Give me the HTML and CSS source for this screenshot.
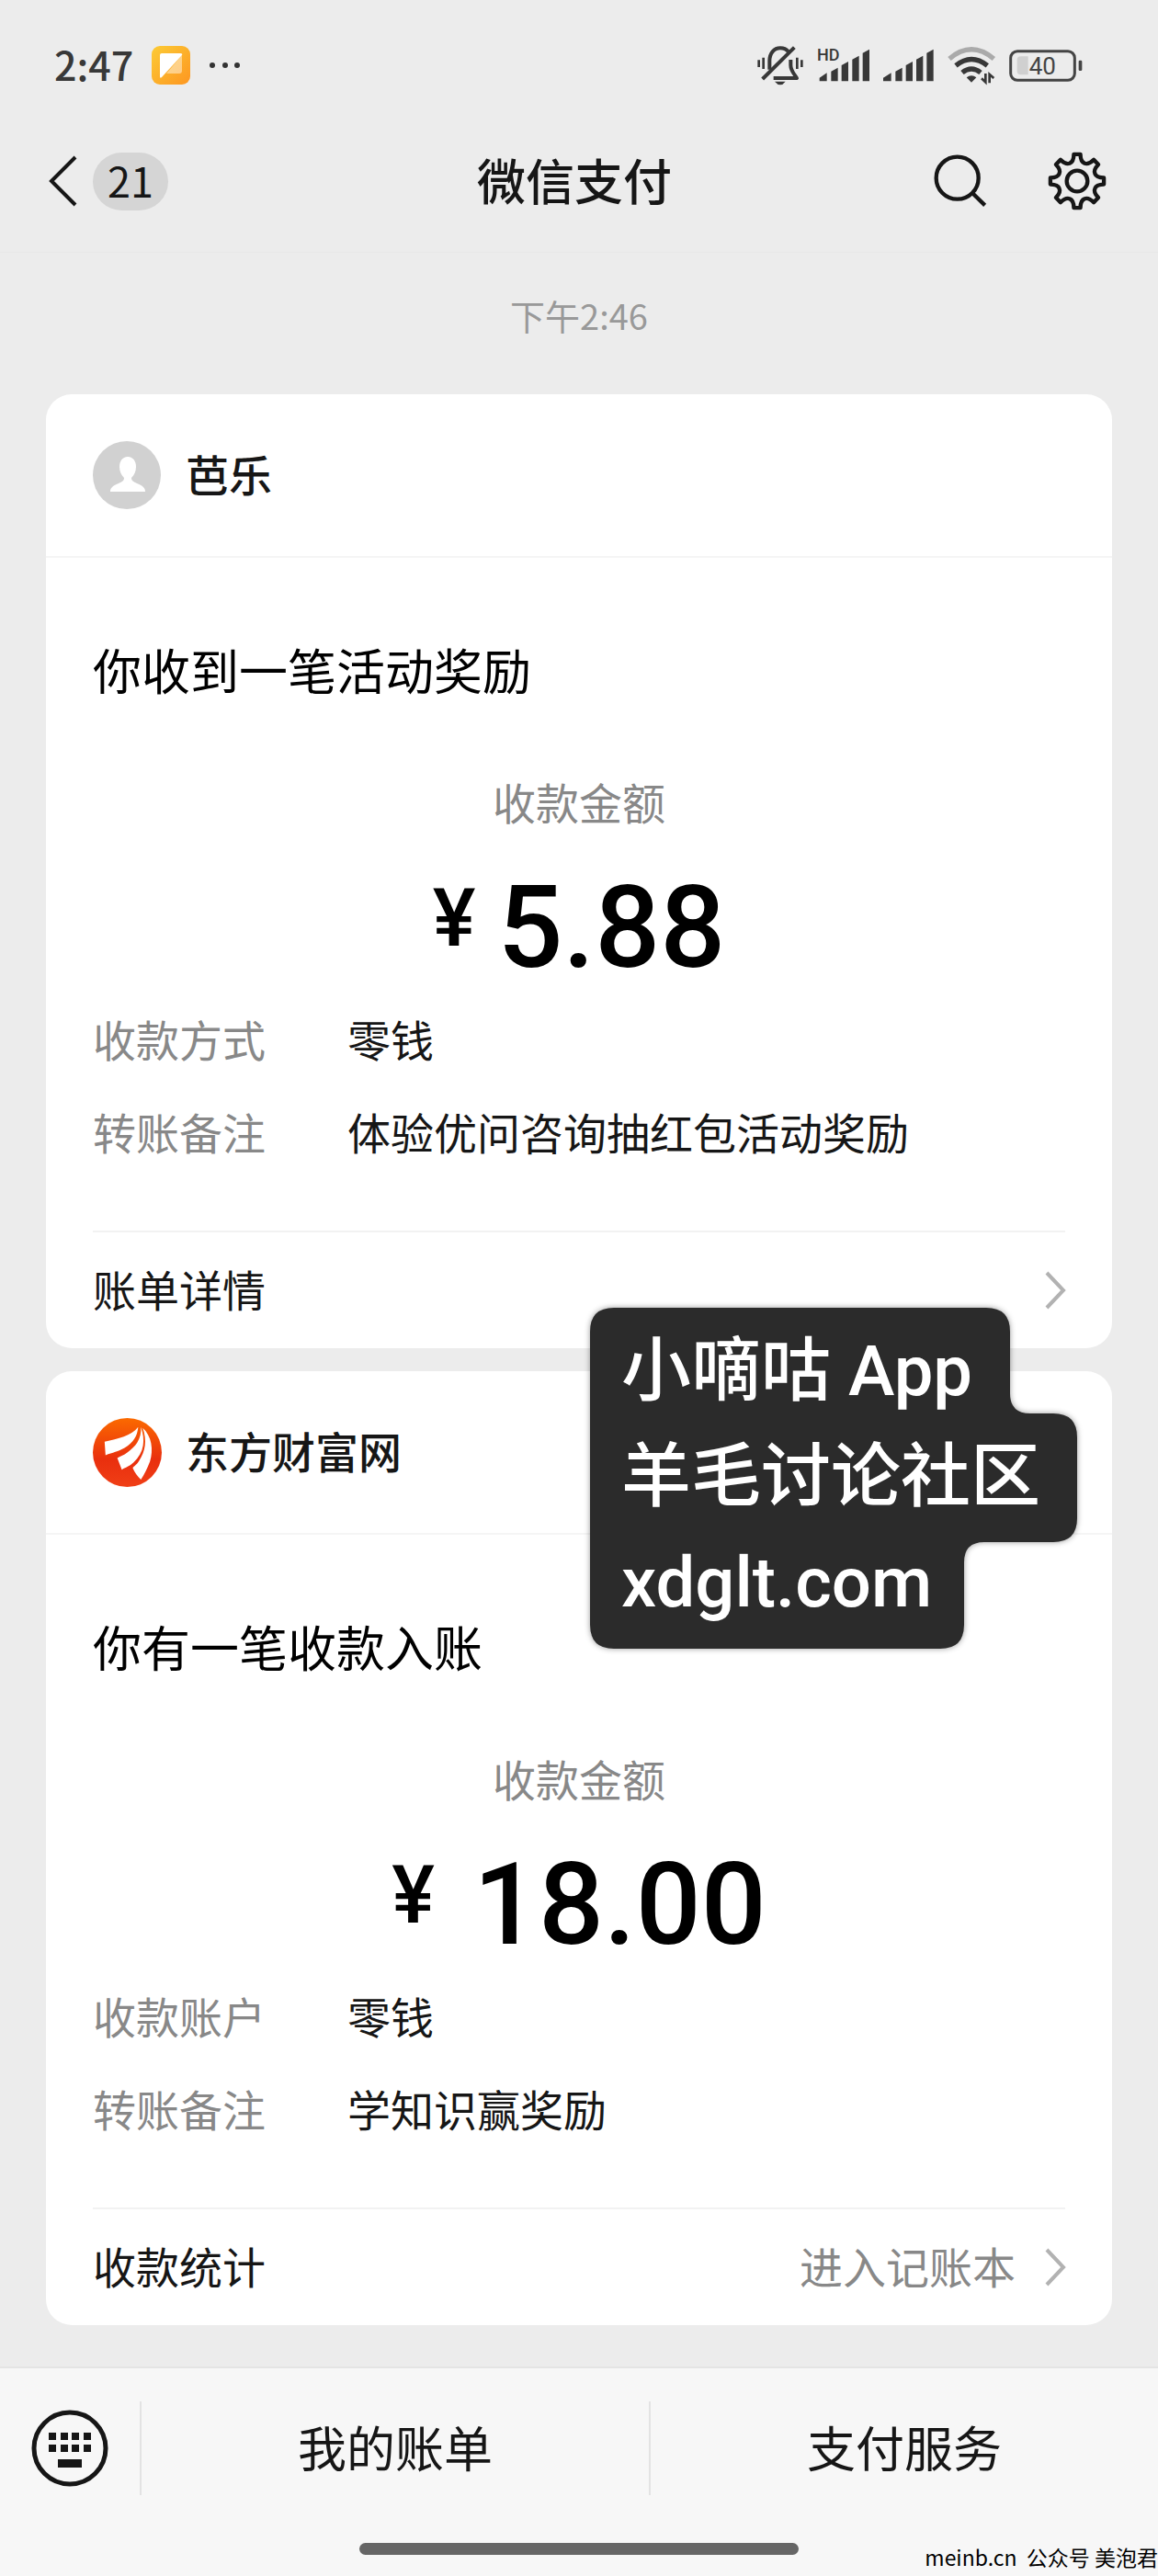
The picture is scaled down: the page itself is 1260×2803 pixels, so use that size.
FILE: index.html
```html
<!DOCTYPE html>
<html lang="zh-CN">
<head>
  <meta charset="UTF-8">
  <meta name="viewport" content="width=device-width, initial-scale=1.0">
  <title>微信支付</title>
  <link rel="stylesheet" href="styles.css">
</head>
<body>
  <div class="status-bar">
    <div class="status-left">
      <span class="clock">2:47</span>
      <svg class="app-icon" width="42" height="42" viewBox="0 0 42 42">
        <defs>
          <linearGradient id="app-bg" x1="0" y1="0" x2="1" y2="1">
            <stop offset="0" stop-color="#fccb35"/>
            <stop offset="1" stop-color="#fd9621"/>
          </linearGradient>
        </defs>
        <rect width="42" height="42" rx="9" fill="url(#app-bg)"/>
        <path d="M33 10v17q0 3-3 3H16z" fill="#fff" opacity="0.45"/>
        <path d="M11 8h20q3 0 2 2L11 34q-2 2-2-1V10q0-2 2-2z" fill="#fff"/>
      </svg>
      <svg width="36" height="8" viewBox="0 0 36 8" fill="#333">
        <circle cx="4" cy="4" r="3"/><circle cx="18" cy="4" r="3"/><circle cx="31" cy="4" r="3"/>
      </svg>
    </div>
    <div class="status-right">
      <svg class="bell" width="52" height="45" viewBox="0 0 156 135" fill="none" stroke="#383838" stroke-width="12">
        <path d="M8 49v23M23 41v37M133 41v37M148 49v23" stroke-width="8"/>
        <path d="M43 80V52C43 26 58 10 78 10c11 0 20 4 26 11"/>
        <path d="M20 111L124 8"/>
        <path d="M112 48v18c0 18 10 26 20 42H56" stroke-linejoin="round"/>
        <path d="M60 119h35q-17 22-35 0z" fill="#383838" stroke="none"/>
      </svg>
      <svg class="signal-hd" width="58" height="44" viewBox="0 -9 174 132" fill="#383838">
        <text class="hd-text" x="0" y="43">HD</text>
        <path d="M8 98l24-16v27H8zM46 77l22-12v44H46zM80 57l22-12v64H80zM115 38l22-12v83h-22zM149 17l22-12v104h-22z"/>
      </svg>
      <svg class="signal" width="56" height="38" viewBox="0 0 168 114" fill="#383838">
        <path d="M0 98l26-16v27H0zM40 77l22-12v44H40zM74 57l22-12v64H74zM108 38l22-12v83h-22zM142 17l22-12v104h-22z"/>
      </svg>
      <svg class="wifi" width="53" height="40" viewBox="0 0 159 120" fill="none" stroke="#383838" stroke-width="16">
        <path d="M6 39Q78-22 151 39" stroke="#aaa"/>
        <path d="M27 61Q78 20 130 61"/>
        <path d="M48 84Q78 60 108 84"/>
        <path d="M62 100q16-13 32 0l-16 16z" fill="#383838" stroke="none"/>
        <path d="M124 87v28l-13-12M137 118V90l14 12" stroke-width="8"/>
      </svg>
      <svg class="battery" width="80" height="35" viewBox="0 0 240 105">
        <rect x="5" y="5" width="209" height="95" rx="22" fill="none" stroke="#444" stroke-width="9"/>
        <path d="M26 34q0-12 12-12h24v60H38q-12 0-12-12z" fill="#d0d0d0"/>
        <rect x="227" y="35" width="11" height="34" rx="4" fill="#444"/>
        <text class="battery-text" x="109" y="81" text-anchor="middle">40</text>
      </svg>
    </div>
  </div>

  <header class="nav">
    <div class="nav-left">
      <button class="icon-btn" aria-label="返回">
        <svg width="39" height="56" viewBox="0 0 39 56" fill="none" stroke="#161616" stroke-width="4">
          <path d="M36 2L10 28l26 26"/>
        </svg>
      </button>
      <span class="unread">21</span>
    </div>
    <h1>微信支付</h1>
    <div class="nav-right">
      <button class="icon-btn" aria-label="搜索">
        <svg width="58" height="58" viewBox="0 0 174 174" fill="none" stroke="#161616" stroke-width="13">
          <circle cx="77" cy="77" r="69"/>
          <path d="M126 126l41 40"/>
        </svg>
      </button>
      <button class="icon-btn" aria-label="设置">
        <svg width="64" height="64" viewBox="-96 -96 192 192" fill="none" stroke="#161616" stroke-width="13" stroke-linejoin="round">
          <path d="M10.7-87.3Q11.1-63 24.1-58.2Q36.7-52.4 54.2-69.3L69.3-54.2Q52.4-36.7 58.2-24.1Q63-11.1 87.3-10.7V10.7Q63 11.1 58.2 24.1Q52.4 36.7 69.3 54.2L54.2 69.3Q36.7 52.4 24.1 58.2Q11.1 63 10.7 87.3H-10.7Q-11.1 63-24.1 58.2Q-36.7 52.4-54.2 69.3L-69.3 54.2Q-52.4 36.7-58.2 24.1Q-63 11.1-87.3 10.7V-10.7Q-63-11.1-58.2-24.1Q-52.4-36.7-69.3-54.2L-54.2-69.3Q-36.7-52.4-24.1-58.2Q-11.1-63-10.7-87.3z"/>
          <circle r="34"/>
        </svg>
      </button>
    </div>
  </header>

  <main class="messages">
    <time class="sent-at">下午2:46</time>

    <article class="card">
      <div class="card-head">
        <svg width="75" height="75" viewBox="0 0 75 75">
          <circle cx="37" cy="37" r="37" fill="#d1d1d1"/>
          <path d="M38 17c6 0 9 5 9 11 0 5-2 9-5 12 0 3 2 4 6 6 7 3 9 5 9 9H19c0-4 2-6 9-9 4-2 6-3 6-6-3-3-5-7-5-12 0-6 3-11 9-11z" fill="#fff"/>
        </svg>
        <span class="sender">芭乐</span>
      </div>
      <div class="card-body">
        <h2>你收到一笔活动奖励</h2>
        <p class="amount-label">收款金额</p>
        <p class="amount"><span class="yen">¥</span><span>5.88</span></p>
        <dl class="details">
          <dt>收款方式</dt>
          <dd>零钱</dd>
          <dt>转账备注</dt>
          <dd>体验优问咨询抽红包活动奖励</dd>
        </dl>
      </div>
      <a class="card-link" href="#">
        <span>账单详情</span>
        <svg class="arrow" width="22" height="42" viewBox="0 0 22 42" fill="none" stroke="#b2b2b2" stroke-width="4">
          <path d="M2 2l18 19L2 40"/>
        </svg>
      </a>
    </article>

    <article class="card">
      <div class="card-head">
        <svg width="75" height="75" viewBox="0 0 76 76">
          <defs>
            <linearGradient id="logo-bg" x1="0" y1="0" x2="0" y2="1">
              <stop offset="0" stop-color="#fb6a00"/>
              <stop offset="0.6" stop-color="#e92f0e"/>
              <stop offset="1" stop-color="#f03f16"/>
            </linearGradient>
          </defs>
          <circle cx="38" cy="38" r="38" fill="url(#logo-bg)"/>
          <g fill="#fff">
            <path d="M50 10C42 20 28 23 13 26l1 15c8-3 14-4 21-8 10-6 14-13 15-23z"/>
            <path d="M53 10c1 13-6 22-15 28-4 3-7 4-11 6l5 13c5-3 9-4 13-8 12-11 13-25 8-39z"/>
            <path d="M55 11c5 14 3 26-4 36-2 4-5 5-7 8 2 5 5 9 9 13 4-6 7-12 10-20 4-13 2-28-8-37z"/>
          </g>
        </svg>
        <span class="sender">东方财富网</span>
      </div>
      <div class="card-body">
        <h2>你有一笔收款入账</h2>
        <p class="amount-label">收款金额</p>
        <p class="amount spaced"><span class="yen">¥</span><span>18.00</span></p>
        <dl class="details">
          <dt>收款账户</dt>
          <dd>零钱</dd>
          <dt>转账备注</dt>
          <dd>学知识赢奖励</dd>
        </dl>
      </div>
      <a class="card-link" href="#">
        <span>收款统计</span>
        <span class="link-hint">进入记账本</span>
        <svg class="arrow" width="22" height="42" viewBox="0 0 22 42" fill="none" stroke="#b2b2b2" stroke-width="4">
          <path d="M2 2l18 19L2 40"/>
        </svg>
      </a>
    </article>

    <div class="promo">
      <svg class="promo-bg" width="530" height="371" viewBox="0 0 530 371">
        <path d="M26 0H431q26 0 26 26V93q0 22 22 22H504q26 0 26 26V229q0 26-26 26H429q-22 0-22 22V345q0 26-26 26H26q-26 0-26-26V26q0-26 26-26z" fill="#2b2b2b"/>
      </svg>
      <p>小嘀咕 App</p>
      <p>羊毛讨论社区</p>
      <p>xdglt.com</p>
    </div>
  </main>

  <footer class="bottom-bar">
    <nav class="menu">
      <button class="keyboard-btn" aria-label="键盘">
        <svg width="84" height="84" viewBox="0 0 84 84" fill="#161616">
          <circle cx="42" cy="42" r="39" fill="none" stroke="#161616" stroke-width="5"/>
          <path d="M19 25h8v8h-8zM32 25h8v8h-8zM44 25h8v8h-8zM57 25h8v8h-8zM19 38h8v8h-8zM32 38h8v8h-8zM44 38h8v8h-8zM57 38h8v8h-8zM29 54h26v9H29z"/>
        </svg>
      </button>
      <button class="menu-item">我的账单</button>
      <button class="menu-item">支付服务</button>
    </nav>
    <div class="home-indicator"></div>
    <p class="watermark">meinb.cn&nbsp; 公众号 美泡君</p>
  </footer>
</body>
</html>
```

FILE: styles.css
```css
* {
  box-sizing: border-box;
}

body {
  display: flex;
  flex-direction: column;
  min-height: 100vh;
  margin: 0;
  background: #ececec;
  color: #161616;
  font-family: "Noto Sans CJK SC", sans-serif;
  font-size: 47px;
  line-height: 60px;
}

h1, h2, p, dl, dd {
  margin: 0;
  font-weight: inherit;
}

button {
  padding: 0;
  border: none;
  background: none;
  color: inherit;
  font: inherit;
  cursor: pointer;
}

svg {
  display: block;
  flex-shrink: 0;
  overflow: visible;
}

/* Status bar */
.status-bar {
  display: flex;
  justify-content: space-between;
  align-items: center;
  height: 120px;
  padding: 22px 82px 0 59px;
}

.status-left,
.status-right {
  display: flex;
  align-items: center;
}

.status-left {
  gap: 20px;
}

.status-right {
  gap: 14px;
}

.clock {
  padding-bottom: 4px;
  color: #383838;
  font-size: 43px;
  font-weight: 500;
}

.hd-text {
  font-family: Roboto, sans-serif;
  font-size: 54px;
  font-weight: 500;
}

.battery-text {
  fill: #444;
  font-family: Roboto, sans-serif;
  font-size: 78px;
}

/* Navigation */
.nav {
  display: grid;
  grid-template-columns: 1fr auto 1fr;
  align-items: center;
  height: 155px;
  padding: 0 56px 0 46px;
  border-bottom: 1px solid #e8e8e8;
}

.nav h1 {
  padding-bottom: 4px;
  font-size: 53px;
  font-weight: 500;
}

.nav-left,
.nav-right {
  display: flex;
  align-items: center;
}

.nav-left {
  gap: 16px;
}

.nav-right {
  justify-content: flex-end;
  gap: 66px;
}

.unread {
  padding: 0 16px 4px;
  border-radius: 32px;
  background: #d5d5d5;
  font-size: 45px;
  line-height: 59px;
}

/* Messages */
.messages {
  position: relative;
  flex: 1;
  padding: 0 50px 40px;
}

.sent-at {
  display: block;
  padding: 38px 0 56px;
  color: #999;
  font-size: 38px;
  text-align: center;
}

.card {
  margin-bottom: 25px;
  border-radius: 28px;
  background: #fff;
}

.card:last-of-type {
  margin-bottom: 0;
}

.card-head {
  display: flex;
  align-items: center;
  gap: 26px;
  height: 178px;
  padding: 0 51px;
  border-bottom: 2px solid #f5f5f5;
}

.sender {
  padding-bottom: 4px;
  font-weight: 500;
}

.card-body {
  padding: 81px 51px 78px;
}

.card-body h2 {
  color: #000;
  font-size: 53px;
  line-height: 80px;
}

.amount-label {
  margin-top: 74px;
  color: #888;
  text-align: center;
}

.amount {
  display: flex;
  justify-content: center;
  gap: 24px;
  margin: 44px 0 26px;
  color: #000;
  font-family: Roboto, sans-serif;
  font-size: 125px;
  font-weight: 500;
  line-height: 128px;
}

.amount.spaced {
  gap: 42px;
}

.yen {
  font-size: 88px;
  line-height: 94px;
  padding-top: 6px;
}

.details {
  display: grid;
  grid-template-columns: 277px 1fr;
  row-gap: 41px;
}

.details dt {
  color: #888;
}

.card-link {
  display: flex;
  align-items: center;
  gap: 32px;
  height: 128px;
  margin: 0 51px;
  border-top: 2px solid #f2f2f2;
  color: inherit;
  text-decoration: none;
}

.card-link span {
  padding-bottom: 4px;
}

.arrow,
.link-hint {
  margin-left: auto;
}

.link-hint {
  color: #888;
}

.link-hint + .arrow {
  margin-left: 0;
}

/* Floating promo label over the cards */
.promo {
  position: absolute;
  top: 1148px;
  right: 88px;
  width: 530px;
  padding: 12px 34px 14px;
  color: #fff;
  font-family: Roboto, "Noto Sans CJK SC", sans-serif;
  font-size: 76px;
  font-weight: 500;
  line-height: 115px;
  white-space: nowrap;
}

.promo p {
  position: relative;
}

.promo-bg {
  position: absolute;
  top: 0;
  left: 0;
  filter: drop-shadow(0 0 3px rgba(0, 0, 0, 0.4));
}

/* Bottom bar */
.bottom-bar {
  position: relative;
  border-top: 2px solid #e4e4e4;
  background: #f7f7f7;
}

.menu {
  display: flex;
  align-items: center;
  height: 174px;
}

.keyboard-btn {
  padding: 0 34px;
}

.menu-item {
  flex: 1;
  height: 102px;
  padding-bottom: 4px;
  border-left: 2px solid #e3e3e3;
  font-size: 53px;
}

.home-indicator {
  width: 38%;
  height: 13px;
  margin: 16px auto 23px;
  border-radius: 7px;
  background: #666;
}

.watermark {
  position: absolute;
  right: 0;
  bottom: 4px;
  color: #000;
  font-size: 23px;
  line-height: 34px;
}
```
